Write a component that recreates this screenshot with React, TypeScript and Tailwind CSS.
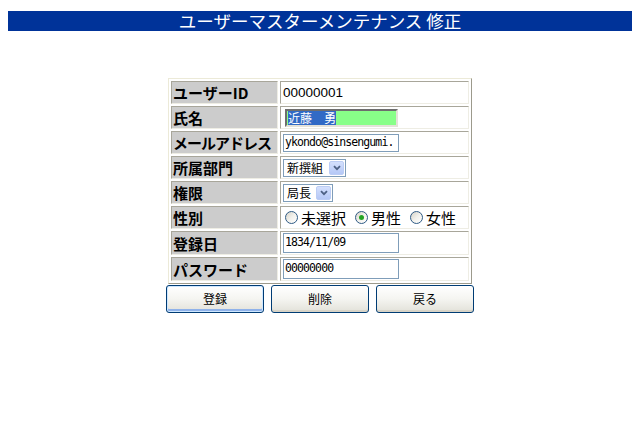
import React from 'react';

const jp = "font-['Noto_Sans_CJK_JP',sans-serif]";
const mono = "font-['DejaVu_Sans_Mono','Noto_Sans_CJK_JP',monospace]";

const Label: React.FC<{ children: React.ReactNode; tight?: boolean }> = ({ children, tight }) => (
  <div
    className={`bg-[#cccccc] border border-t-[#a8a69a] border-l-[#a8a69a] border-b-[#eeede4] border-r-[#eeede4] flex items-center pl-px whitespace-nowrap overflow-hidden text-[15px] leading-none font-bold text-black ${jp} ${
      tight ? 'tracking-[-1px]' : ''
    }`}
  >
    {children}
  </div>
);

const Value: React.FC<{ children: React.ReactNode }> = ({ children }) => (
  <div className="bg-white border border-t-[#a8a69a] border-l-[#a8a69a] border-b-[#eeede4] border-r-[#eeede4] flex items-center pl-[2px]">
    {children}
  </div>
);

const XpSelect: React.FC<{ text: string; width: string }> = ({ text, width }) => (
  <div className={`${width} h-[18px] border border-[#7f9db9] bg-white flex items-center justify-between pl-[3px] pr-px`}>
    <span className={`text-[12px] leading-none text-black ${jp}`}>{text}</span>
    <span className="w-[15px] h-[14px] rounded-[2px] border border-[#bccdf5] bg-gradient-to-b from-[#d4e0fd] to-[#b5c8f6] flex items-center justify-center">
      <svg width="8" height="6" viewBox="0 0 8 6">
        <path d="M1 1.2 L4 4.2 L7 1.2" fill="none" stroke="#4d6185" strokeWidth="1.8" />
      </svg>
    </span>
  </div>
);

const Radio: React.FC<{ checked?: boolean; label: string }> = ({ checked, label }) => (
  <div className="flex items-center gap-[3px]">
    <span className="w-[13px] h-[13px] rounded-full border border-[#2f5b85] bg-gradient-to-br from-[#d6d3c8] via-[#f2f1ec] to-white flex items-center justify-center">
      {checked && <span className="w-[5px] h-[5px] rounded-full bg-[#23a423]" />}
    </span>
    <span className={`text-[15px] leading-none text-black ${jp}`}>{label}</span>
  </div>
);

const XpButton: React.FC<{ label: string; focused?: boolean }> = ({ label, focused }) => (
  <button
    className={`w-[98px] h-[28px] rounded-[3px] border border-[#003c74] bg-gradient-to-b from-white via-[#f5f5f1] to-[#e2e1d9] text-[12px] text-black ${jp} ${
      focused
        ? 'shadow-[inset_0_0_0_1px_#cee7ff,inset_0_-2px_0_1px_#8fb2ea]'
        : 'shadow-[inset_0_-2px_0_0_#d8d4c8]'
    }`}
  >
    {label}
  </button>
);

export default function App() {
  return (
    <div className="w-[640px] h-[433px] bg-white overflow-hidden">
      <div className="mx-2 mt-[11px] h-[20px] bg-[#003399] flex items-center justify-center">
        <span className={`text-white text-[17.5px] leading-none ${jp}`}>ユーザーマスターメンテナンス 修正</span>
      </div>

      <div className="mt-[47px] mx-auto w-[304px] border border-t-[#ecead8] border-l-[#ecead8] border-b-[#9c9a8c] border-r-[#9c9a8c] p-[2px] grid grid-cols-[107px_189px] grid-rows-[23px_23px_23px_23px_23px_23px_24px_24px] gap-[2px]">
        <Label>ユーザーID</Label>
        <Value>
          <span className="text-[13.5px] leading-none text-black font-['Liberation_Sans',sans-serif]">00000001</span>
        </Value>

        <Label>氏名</Label>
        <Value>
          <div className="ml-[2px] w-[113px] h-[18px] border-2 border-t-[#6e6e6e] border-l-[#6e6e6e] border-b-[#e4e2d8] border-r-[#e4e2d8] bg-[#88ff88] flex items-center pl-px">
            <span className={`bg-[#316ac5] text-white text-[12px] leading-[14px] ${jp}`}>近藤　勇</span>
          </div>
        </Value>

        <Label tight>メールアドレス</Label>
        <Value>
          <div className={`w-[116px] h-[18px] border border-[#7f9db9] flex items-center pl-px overflow-hidden whitespace-nowrap text-[11.5px] tracking-[-0.9px] text-black ${mono}`}>
            ykondo@sinsengumi.
          </div>
        </Value>

        <Label>所属部門</Label>
        <Value>
          <XpSelect text="新撰組" width="w-[63px]" />
        </Value>

        <Label>権限</Label>
        <Value>
          <XpSelect text="局長" width="w-[50px]" />
        </Value>

        <Label>性別</Label>
        <Value>
          <div className="flex items-center gap-[9px] pl-[2px]">
            <Radio label="未選択" />
            <Radio label="男性" checked />
            <Radio label="女性" />
          </div>
        </Value>

        <Label>登録日</Label>
        <Value>
          <div className={`w-[116px] h-[20px] border border-[#7f9db9] flex items-center pl-px text-[11.5px] tracking-[-0.9px] text-black ${mono}`}>
            1834/11/09
          </div>
        </Value>

        <Label>パスワード</Label>
        <Value>
          <div className={`w-[116px] h-[20px] border border-[#7f9db9] flex items-center pl-px text-[11.5px] tracking-[-0.9px] text-black ${mono}`}>
            00000000
          </div>
        </Value>
      </div>

      <div className="mt-px flex justify-center gap-[7px]">
        <XpButton label="登録" focused />
        <XpButton label="削除" />
        <XpButton label="戻る" />
      </div>
    </div>
  );
}
